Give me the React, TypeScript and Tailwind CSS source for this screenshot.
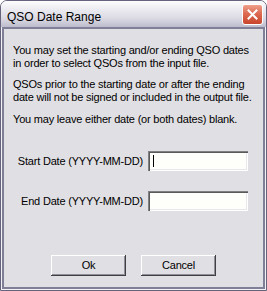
import React from "react";

const font = { fontFamily: '"Liberation Sans", Arial, sans-serif' };

function Button({ label }: { label: string }) {
  return (
    <button
      className="w-[75px] h-[21px] bg-[#e0dfe3] text-[11px] tracking-[-0.2px] text-black flex items-center justify-center shadow-[inset_-1px_-1px_0_#404040,inset_1px_1px_0_#ffffff,inset_-2px_-2px_0_#8f8e9c]"
      style={font}
    >
      {label}
    </button>
  );
}

function Field({ caret }: { caret?: boolean }) {
  return (
    <div className="relative ml-[5px] w-[100px] h-[20px] bg-[#fefefa] shadow-[inset_1px_1px_0_#808080,inset_2px_2px_0_#5a5a5a,inset_-1px_-1px_0_#ffffff,inset_-2px_-2px_0_#e8e7ee]">
      {caret && <span className="absolute left-[5px] top-[4px] w-px h-[12px] bg-black" />}
    </div>
  );
}

export default function App() {
  return (
    <div
      className="w-[267px] h-[291px] flex flex-col bg-[#f2f2f6] border border-[#65647c] rounded-t-[7px] overflow-hidden text-black"
      style={font}
    >
      <div className="h-[26px] flex items-start justify-between pl-[6px] pr-[3px] bg-[linear-gradient(to_bottom,#fdfdfe_0%,#ececf2_30%,#dcdbe4_65%,#bdbccd_100%)]">
        <span className="mt-[9px] text-[12px] leading-[14px]">QSO Date Range</span>
        <div className="mt-[3px] w-[21px] h-[21px] rounded-[3px] border border-white bg-[linear-gradient(to_bottom,#eea08c_0%,#dd6b52_45%,#c8452c_100%)] flex items-center justify-center">
          <svg width="11" height="11" viewBox="0 0 11 11">
            <path d="M1.5 1.5 L9.5 9.5 M9.5 1.5 L1.5 9.5" stroke="white" strokeWidth="2" strokeLinecap="square" />
          </svg>
        </div>
      </div>
      <div className="flex-1 mx-[1px] mb-[1px] border-2 border-[#807f98] bg-[#e0dfe3] flex flex-col text-[11px] tracking-[-0.2px]">
        <div className="pl-[9px] pt-[15px] leading-[13px]">
          <p>You may set the starting and/or ending QSO dates<br />in order to select QSOs from the input file.</p>
          <p className="mt-[8px]">QSOs prior to the starting date or after the ending<br />date will not be signed or included in the output file.</p>
          <p className="mt-[9px]">You may leave either date (or both dates) blank.</p>
        </div>
        <div className="mt-[25px] flex items-center pl-[9px]">
          <span className="w-[130px] text-right">Start Date (YYYY-MM-DD)</span>
          <Field caret />
        </div>
        <div className="mt-[20px] flex items-center pl-[9px]">
          <span className="w-[130px] text-right">End Date (YYYY-MM-DD)</span>
          <Field />
        </div>
        <div className="flex-1" />
        <div className="flex justify-center gap-[15px] mb-[11px]">
          <Button label="Ok" />
          <Button label="Cancel" />
        </div>
      </div>
    </div>
  );
}
